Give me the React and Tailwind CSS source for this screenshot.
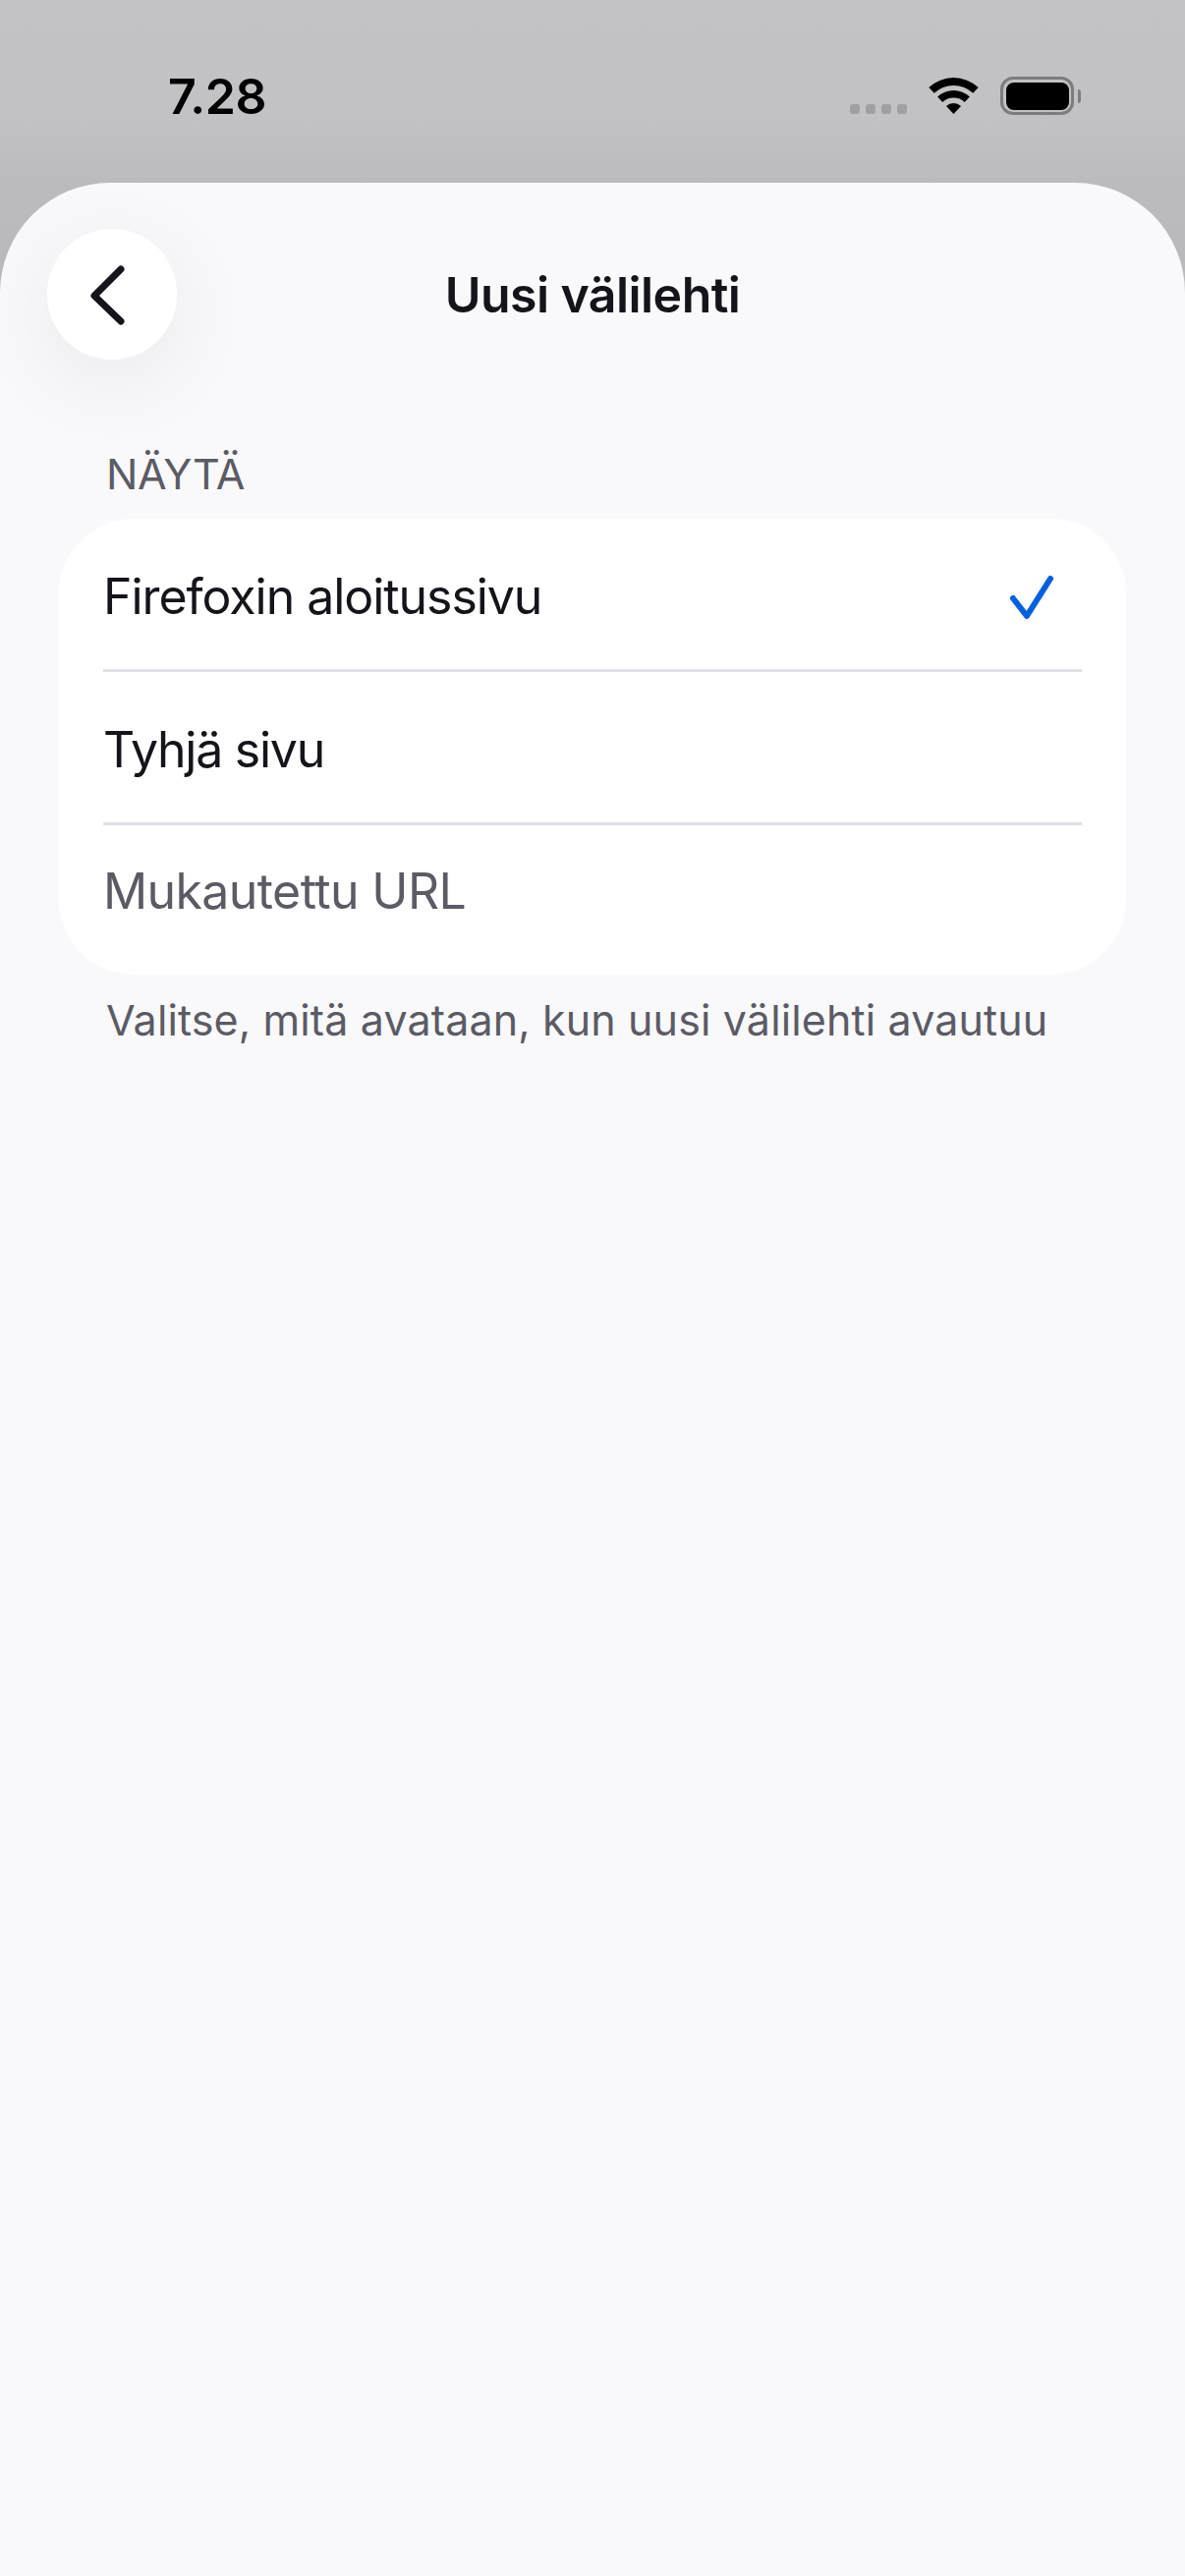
const FONT = { fontFamily: 'Inter, "Liberation Sans", sans-serif' };

function StatusBar() {
  return (
    <div className="relative flex h-[186px] items-start justify-between pl-[171px] pr-[106px] pt-[68px]">
      <span className="text-[50px] leading-[60px] font-semibold tracking-[-0.4px] text-black">7.28</span>
      <div className="flex items-start pt-[10px]">
        <div className="mt-[28px] mr-[22px] flex gap-[6px]">
          <span className="h-[10px] w-[10px] rounded-[3px] bg-[#a0a0a2]" />
          <span className="h-[10px] w-[10px] rounded-[3px] bg-[#a0a0a2]" />
          <span className="h-[10px] w-[10px] rounded-[3px] bg-[#a0a0a2]" />
          <span className="h-[10px] w-[10px] rounded-[3px] bg-[#a0a0a2]" />
        </div>
        <svg width="51" height="37" viewBox="0 0 51 37" className="mt-[1px] mr-[22px]">
          <path d="M0.3 10 A37 37 0 0 1 50.7 10 L45.3 15.8 A29 29 0 0 0 5.7 15.8 Z" fill="#000" />
          <path d="M9.1 19.5 A24 24 0 0 1 41.9 19.5 L36.7 25 A16.5 16.5 0 0 0 14.3 25 Z" fill="#000" />
          <path d="M18 29 A11 11 0 0 1 33 29 L25.5 37 Z" fill="#000" />
        </svg>
        <div className="flex items-center">
          <div className="h-[39px] w-[75px] rounded-[13px] border-[3.5px] border-[#7d7d7f] p-[2.5px]">
            <div className="h-full w-full rounded-[8px] bg-black" />
          </div>
          <span className="ml-[4px] h-[14px] w-[3px] rounded-r-[3px] bg-[#7d7d7f]" />
        </div>
      </div>
    </div>
  );
}

function Row({ label, muted, selected, last, tracking }) {
  return (
    <div className={`flex items-center justify-between ${last ? 'h-[152px] pb-[18px]' : 'h-[156px] border-b-[3px] border-[#e0e0e6] pt-[5px]'}`}>
      <span className={`text-[50px] leading-[60px] ${tracking} ${muted ? 'text-[#5b5b66]' : 'text-[#15141a]'}`}>{label}</span>
      {selected && (
        <svg width="50" height="50" viewBox="0 0 50 50" fill="none" className="mr-[25px]">
          <path d="M5 27 L19 45 L43 7" stroke="#0060df" strokeWidth="6" strokeLinecap="round" strokeLinejoin="round" />
        </svg>
      )}
    </div>
  );
}

export default function App() {
  return (
    <div className="flex min-h-[2622px] w-full flex-col bg-[linear-gradient(#c3c3c5,#c2c2c4_120px,#bbbbbd_186px,#b9b9bb_340px)]" style={FONT}>
      <StatusBar />

      <div className="flex-1 rounded-t-[112px] bg-[#f9f9fb] px-[60px] pt-[47px]">
        <div className="-mx-[12px] grid grid-cols-[132px_1fr_132px] items-center">
          <button className="flex h-[133px] w-[132px] items-center justify-center rounded-full bg-white shadow-[0_20px_90px_rgba(0,0,0,0.07)]">
            <svg width="132" height="133" viewBox="0 0 132 133" fill="none">
              <path d="M75 41 L48 68 L75 94" stroke="#15141a" strokeWidth="7" strokeLinecap="round" strokeLinejoin="round" />
            </svg>
          </button>
          <h1 className="text-center text-[50px] leading-[60px] font-semibold tracking-[-0.55px] text-[#15141a]">Uusi välilehti</h1>
        </div>

        <div className="mt-[90px] pl-[48px] text-[43px] leading-[52px] tracking-[-0.3px] text-[#5b5b66]">NÄYTÄ</div>

        <div className="mt-[20px] rounded-[76px] bg-white px-[45px]">
          <Row label="Firefoxin aloitussivu" tracking="tracking-[-1.05px]" selected />
          <Row label="Tyhjä sivu" tracking="tracking-[-1.25px]" />
          <Row label="Mukautettu URL" tracking="tracking-[-0.6px]" muted last />
        </div>

        <p className="mt-[20px] pl-[48px] text-[43px] leading-[52px] tracking-[0.13px] text-[#5b5b66]">Valitse, mitä avataan, kun uusi välilehti avautuu</p>
      </div>
    </div>
  );
}
